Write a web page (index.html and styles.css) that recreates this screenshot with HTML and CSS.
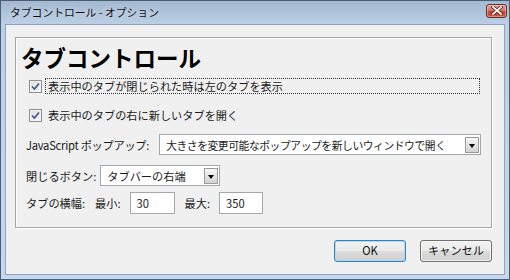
FILE: index.html
```html
<!DOCTYPE html>
<html lang="ja">
<head>
<meta charset="utf-8">
<title>タブコントロール - オプション</title>
<link rel="stylesheet" href="styles.css">
</head>
<body>
<div class="window">
  <div class="titlebar">
    <span class="title">タブコントロール - オプション</span>
    <span class="close-btn">
      <svg width="12" height="9" viewBox="0 0 12 9"><path d="M2 1 L10 8 M10 1 L2 8" stroke="#5a1a14" stroke-width="3.4" stroke-linecap="square"/><path d="M2 1 L10 8 M10 1 L2 8" stroke="#fff" stroke-width="1.8" stroke-linecap="square"/></svg>
    </span>
  </div>
  <div class="client">
    <div class="group">
      <div class="heading">タブコントロール</div>
      <div class="check-row first">
        <span class="checkbox"><svg width="9" height="9" viewBox="0 0 9 9"><path d="M1 4.5 L3.5 7 L8 1.5" fill="none" stroke="#3b4f8c" stroke-width="1.6"/></svg></span>
        <span class="check-label focused">表示中のタブが閉じられた時は左のタブを表示</span>
      </div>
      <div class="check-row second">
        <span class="checkbox"><svg width="9" height="9" viewBox="0 0 9 9"><path d="M1 4.5 L3.5 7 L8 1.5" fill="none" stroke="#3b4f8c" stroke-width="1.6"/></svg></span>
        <span class="check-label">表示中のタブの右に新しいタブを開く</span>
      </div>
      <div class="field-row js-row">
        <span class="label js-label">JavaScript ポップアップ:</span>
        <div class="select wide"><span class="select-text compact">大きさを変更可能なポップアップを新しいウィンドウで開く</span><span class="drop"></span></div>
      </div>
      <div class="field-row close-row">
        <span class="label">閉じるボタン:</span>
        <div class="select narrow"><span class="select-text">タブバーの右端</span><span class="drop"></span></div>
      </div>
      <div class="field-row width-row">
        <span class="label">タブの横幅:</span>
        <span class="label sub">最小:</span>
        <div class="input min">30</div>
        <span class="label sub2">最大:</span>
        <div class="input max">350</div>
      </div>
    </div>
    <div class="buttons">
      <div class="btn default">OK</div>
      <div class="btn">キャンセル</div>
    </div>
  </div>
</div>
</body>
</html>
```

FILE: styles.css
```css
* { box-sizing: border-box; }
html, body { margin: 0; padding: 0; }
body {
  width: 510px;
  height: 280px;
  font-family: "Noto Sans CJK JP", "Noto Sans", sans-serif;
  font-size: 11.2px;
  color: #1a1a1a;
  overflow: hidden;
}
.window {
  width: 510px;
  height: 280px;
  border: 1px solid #4e5e70;
  background: linear-gradient(#a3b8d1 0px, #bcd0e6 24px, #c4d8ee 100%);
  padding: 0 4px 4px 4px;
  display: flex;
  flex-direction: column;
}
.titlebar {
  height: 23px;
  display: flex;
  align-items: center;
  justify-content: space-between;
  flex: none;
}
.title {
  margin-left: 5px;
  margin-top: -2px;
  font-size: 10.8px;
  color: #111;
  text-shadow: 0 0 6px rgba(255,255,255,0.7);
}
.close-btn {
  width: 21px;
  height: 14px;
  margin-right: -2px;
  margin-top: -4px;
  border: 1px solid #6e2c26;
  border-radius: 3px;
  background: linear-gradient(#e3a49a 0%, #d27a6d 45%, #bf4635 55%, #c85a45 100%);
  display: flex;
  align-items: center;
  justify-content: center;
  box-shadow: inset 0 0 0 1px rgba(255,255,255,0.35);
}
.client {
  flex: 1;
  background: #f0f0f0;
  border: 1px solid #8ea4bc;
  padding: 12px 12px 0 9px;
  display: flex;
  flex-direction: column;
}
.group {
  height: 191px;
  border: 1px solid #a6a6a6;
  box-shadow: 1px 1px 0 #fff, inset 1px 1px 0 #fff;
  display: flex;
  flex-direction: column;
}
.heading {
  height: 36px;
  line-height: 38px;
  font-size: 22.5px;
  font-weight: bold;
  color: #000;
  margin-left: 5px;
}
.check-row {
  height: 16px;
  display: flex;
  align-items: center;
}
.check-row.first { margin-top: 4px; }
.check-row.second { margin-top: 13px; }
.checkbox {
  width: 13px;
  height: 13px;
  margin-left: 13px;
  border: 1px solid #8e8f8f;
  background: linear-gradient(135deg, #dcdcdc, #fbfbfb);
  box-shadow: inset 0 0 0 1px #f4f4f4;
  display: flex;
  align-items: center;
  justify-content: center;
}
.check-label {
  height: 16px;
  line-height: 14px;
  margin-left: 3px;
  padding-left: 2px;
  border: 1px solid transparent;
}
.check-label.focused {
  flex: 1;
  margin-right: 11px;
  border: 1px dotted #333;
}
.field-row {
  display: flex;
  align-items: center;
  padding-left: 10px;
}
.js-row { margin-top: 11px; height: 21px; }
.close-row { margin-top: 10px; height: 21px; }
.width-row { margin-top: 6px; height: 22px; }
.label { white-space: nowrap; }
.js-label { letter-spacing: -0.25px; }
.select {
  height: 21px;
  background: #fff;
  border: 1px solid #a4a7ab;
  display: flex;
  align-items: center;
  justify-content: space-between;
  padding: 0 1px 0 6px;
  min-width: 0;
}
.select.wide { flex: 1; margin-left: 10px; margin-right: 10px; }
.select.narrow { width: 120px; margin-left: 4px; }
.select-text { white-space: nowrap; min-width: 0; }
.select-text.compact { font-size: 10.8px; letter-spacing: -0.45px; }
.drop {
  flex: none;
  width: 14px;
  height: 16px;
  border: 1px solid #9b9b9b;
  background: linear-gradient(#f6f6f6, #d3d3d3);
  position: relative;
}
.drop::after {
  content: "";
  position: absolute;
  left: 3px;
  top: 6px;
  border-left: 3.5px solid transparent;
  border-right: 3.5px solid transparent;
  border-top: 4px solid #000;
}
.label.sub { margin-left: 10px; }
.label.sub2 { margin-left: 10px; }
.input {
  height: 22px;
  background: #fff;
  border: 1px solid #a4a7ab;
  line-height: 20px;
  padding-left: 6px;
  margin-left: 9px;
}
.input.min { width: 45px; }
.input.max { width: 44px; margin-left: 9px; }
.buttons {
  margin-top: 12px;
  display: flex;
  justify-content: flex-end;
  gap: 14px;
}
.btn {
  width: 72px;
  height: 22px;
  border: 1px solid #707070;
  border-radius: 3px;
  background: linear-gradient(#f2f2f2 0%, #ebebeb 48%, #dcdcdc 52%, #cfcfcf 100%);
  box-shadow: inset 0 0 0 1px rgba(255,255,255,0.7);
  text-align: center;
  line-height: 19px;
  color: #111;
}
.btn.default {
  border-color: #3c7fb1;
  box-shadow: inset 0 0 0 1px #a8dcf7;
}
```
